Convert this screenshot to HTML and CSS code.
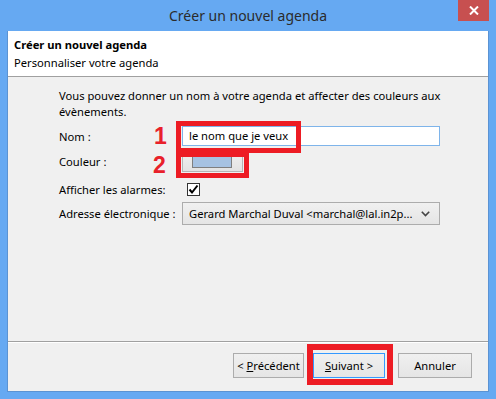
FILE: index.html
```html
<!DOCTYPE html>
<html lang="fr">
<head>
<meta charset="utf-8">
<title>Créer un nouvel agenda</title>
<link rel="stylesheet" href="styles.css">
</head>
<body>
<div class="window">
  <div class="titlebar">
    <span class="title">Créer un nouvel agenda</span>
    <div class="close">
      <svg width="10" height="9" viewBox="0 0 10 9"><path d="M1 0.5 L9 8.5 M9 0.5 L1 8.5" stroke="#fff" stroke-width="2"/></svg>
    </div>
  </div>
  <div class="client">
    <div class="header">
      <div class="h-title">Créer un nouvel agenda</div>
      <div class="h-sub">Personnaliser votre agenda</div>
    </div>
    <div class="body">
      <p class="intro">Vous pouvez donner un nom à votre agenda et affecter des couleurs aux évènements.</p>
      <div class="row r-nom">
        <span class="label">Nom :</span>
        <div class="input">le nom que je veux</div>
      </div>
      <div class="row r-col">
        <span class="label">Couleur :</span>
        <div class="colorbtn"><span class="swatch"></span></div>
      </div>
      <div class="row r-alarm">
        <span class="label">Afficher les alarmes:</span>
        <span class="check">
          <svg width="11" height="11" viewBox="0 0 11 11"><path d="M1.5 5.5 L4 8.5 L9.5 1.5" stroke="#000" stroke-width="2" fill="none"/></svg>
        </span>
      </div>
      <div class="row r-mail">
        <span class="label">Adresse électronique :</span>
        <div class="select">
          <span class="sel-text">Gerard Marchal Duval &lt;marchal@lal.in2p...</span>
          <svg class="chev" width="9" height="6" viewBox="0 0 9 6"><path d="M0.8 0.8 L4.5 4.6 L8.2 0.8" stroke="#444" stroke-width="1.6" fill="none"/></svg>
        </div>
      </div>
    </div>
    <div class="footer">
      <button class="btn b-prev">&lt; <u>P</u>récédent</button>
      <button class="btn b-next"><u>S</u>uivant &gt;</button>
      <button class="btn b-cancel">Annuler</button>
    </div>
  </div>
  <div class="mark box1"></div>
  <div class="mark box2"></div>
  <div class="mark box3"></div>
  <span class="num n1">1</span>
  <span class="num n2">2</span>
</div>
</body>
</html>
```

FILE: styles.css
```css
html, body {
  margin: 0;
  padding: 0;
}
body {
  width: 496px;
  height: 399px;
  overflow: hidden;
  font-family: "Noto Sans", "Open Sans", sans-serif;
  font-size: 11.2px;
  color: #000;
}
.window {
  position: relative;
  width: 496px;
  height: 399px;
  box-sizing: border-box;
  background: #66a9f2;
  padding: 0 7px 7px 7px;
  display: flex;
  flex-direction: column;
}
.titlebar {
  position: relative;
  height: 31px;
  flex: none;
  display: flex;
  align-items: center;
  justify-content: center;
}
.title {
  font-size: 14px;
  color: #2b2b2b;
  margin-top: -1px;
}
.close {
  position: absolute;
  top: 0;
  right: 0;
  width: 31px;
  height: 21px;
  background: #c75050;
  display: flex;
  align-items: center;
  justify-content: center;
}
.client {
  flex: 1;
  border: 1px solid #5b93d3;
  border-top: none;
  background: #f0f0f0;
  display: flex;
  flex-direction: column;
}
.header {
  background: #fff;
  height: 46px;
  border-bottom: 1px solid #a0a0a0;
  padding: 6px 0 0 6px;
  box-sizing: border-box;
  flex: none;
}
.h-title {
  font-weight: bold;
  line-height: 16px;
}
.h-sub {
  line-height: 16px;
  margin-top: 2px;
}
.body {
  flex: 1;
  padding: 11px 0 0 51px;
}
.intro {
  margin: 0;
  width: 400px;
  line-height: 16px;
}
.row {
  display: flex;
  align-items: center;
}
.label {
  width: 123px;
  flex: none;
  white-space: nowrap;
}
.r-nom { height: 22px; margin-top: 5px; }
.r-col { height: 22px; margin-top: 3px; }
.r-alarm { height: 22px; margin-top: 6px; }
.r-mail { height: 23px; margin-top: 2px; }
.input {
  width: 258px;
  height: 20px;
  box-sizing: border-box;
  border: 1px solid #7eb4ea;
  background: #fff;
  padding-left: 6px;
  line-height: 18px;
}
.colorbtn {
  width: 61px;
  height: 21px;
  box-sizing: border-box;
  border: 1px solid #b5b5b5;
  background: linear-gradient(#f0f0f0, #e3e3e3);
  display: flex;
  align-items: center;
  padding-left: 9px;
}
.swatch {
  width: 40px;
  height: 13px;
  box-sizing: border-box;
  border: 1px solid #7f7f7f;
  background: #a6c2e2;
}
.check {
  margin-left: 5px;
  width: 13px;
  height: 13px;
  box-sizing: border-box;
  border: 1px solid #333;
  background: #fff;
  display: flex;
  align-items: center;
  justify-content: center;
}
.select {
  width: 258px;
  height: 23px;
  box-sizing: border-box;
  border: 1px solid #acacac;
  background: linear-gradient(#f0f0f0, #e5e5e5);
  display: flex;
  align-items: center;
  padding: 0 9px 0 6px;
}
.sel-text {
  flex: 1;
  white-space: nowrap;
}
.footer {
  flex: none;
  height: 50px;
  border-top: 1px solid #a0a0a0;
  box-shadow: inset 0 1px 0 #fff;
  display: flex;
  align-items: flex-start;
  justify-content: flex-end;
  padding: 11px 16px 0 0;
  box-sizing: border-box;
}
.btn {
  font-family: inherit;
  font-size: 11.2px;
  color: #000;
  height: 25px;
  box-sizing: border-box;
  border: 1px solid #acacac;
  background: linear-gradient(#f0f0f0, #e5e5e5);
  padding: 0;
  margin: 0;
}
.b-prev { width: 71px; }
.b-next { width: 72px; margin-left: 9px; border-color: #3399ff; }
.b-cancel { width: 74px; margin-left: 13px; }
.mark {
  position: absolute;
  border: 5px solid #ed1c24;
  box-sizing: border-box;
}
.box1 { left: 176px; top: 121px; width: 125px; height: 32px; }
.box2 { left: 176px; top: 152px; width: 73px; height: 26px; }
.box3 { left: 307px; top: 344px; width: 86px; height: 41px; border-width: 6px; }
.num {
  position: absolute;
  font-family: "Liberation Sans", Arial, sans-serif;
  font-weight: bold;
  font-size: 23px;
  line-height: 23px;
  color: #e8202a;
}
.n1 { left: 154px; top: 125px; }
.n2 { left: 153px; top: 154px; }
```
